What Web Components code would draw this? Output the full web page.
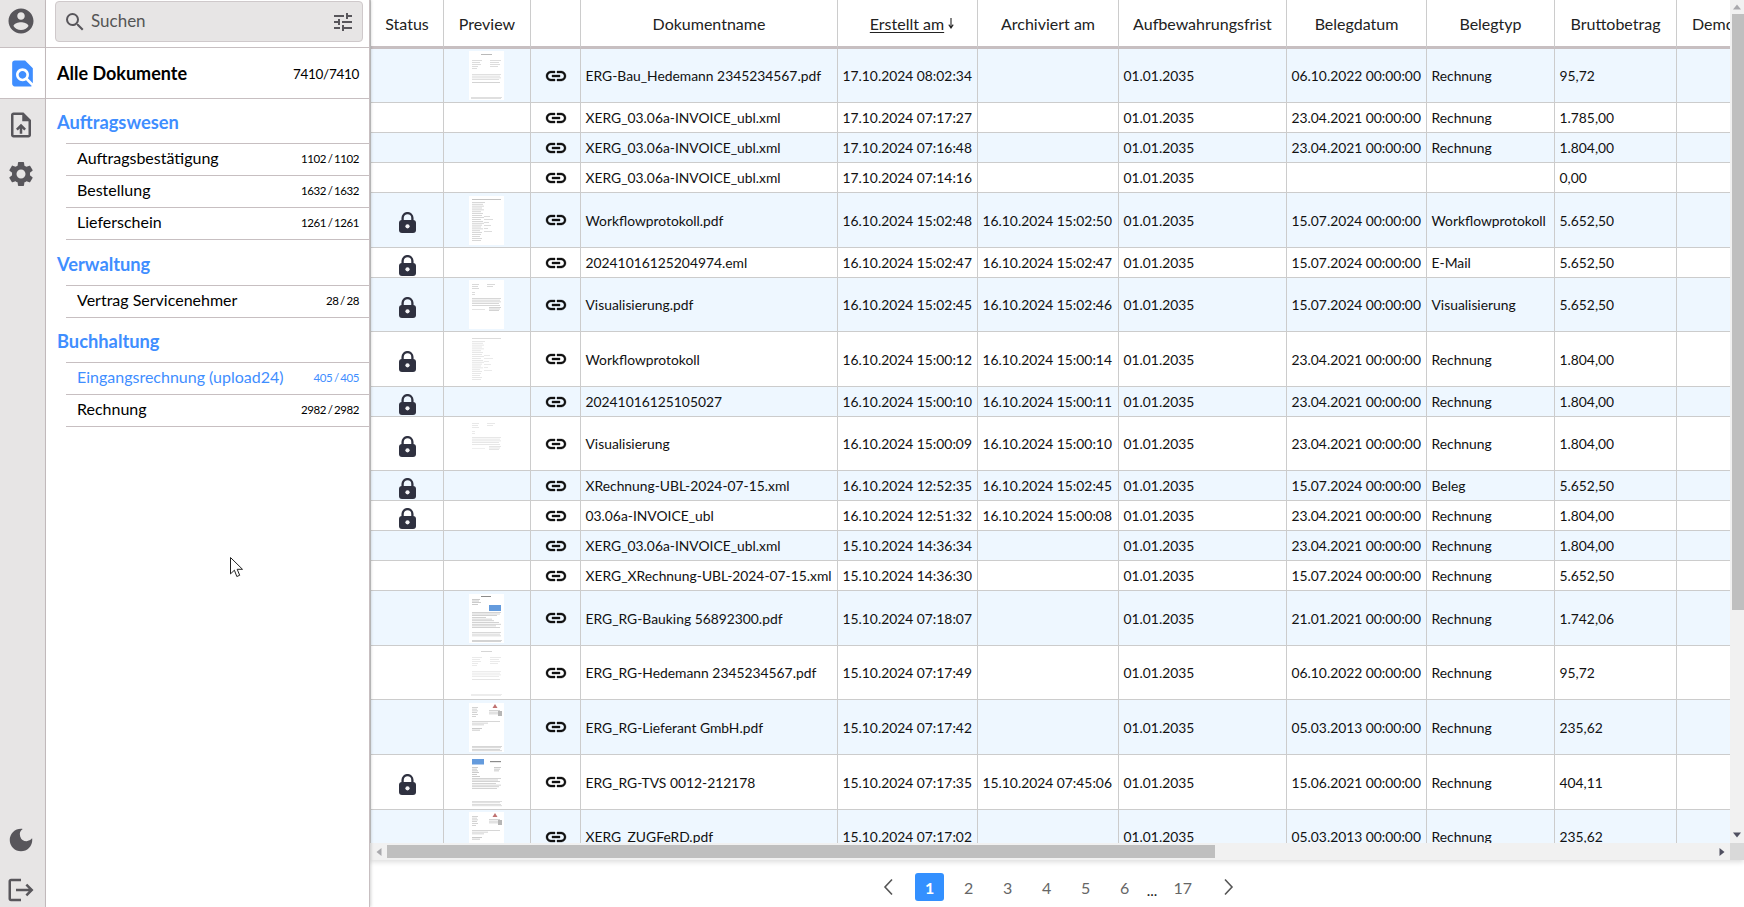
<!DOCTYPE html>
<html lang="de">
<head>
<meta charset="utf-8">
<title>Dokumente</title>
<style>
html,body{margin:0;height:100%;overflow:hidden;background:#fff;font-family:Lato,"Liberation Sans",sans-serif;color:#111}
</style>
</head>
<body>
<template id="t-shell"><style>
:host{display:flex;width:1744px;height:907px;position:relative;overflow:hidden}
main{flex:1;min-width:0;display:flex;flex-direction:column}
.cursor{position:absolute;left:230px;top:557px;width:13px;height:21px;z-index:5}
</style>
<slot name="rail"></slot><slot name="side"></slot>
<main><slot></slot></main>
<svg class="cursor" viewBox="0 0 13 21"><path d="M.5.5v16.4l3.9-3.7 2.4 6.3 2.9-1.2-2.5-6h5.3z" fill="#fff" stroke="#222" stroke-width="1"/></svg>
</template>

<template id="t-rail"><style>
:host{display:flex;flex-direction:column;flex:none;width:46px;box-sizing:border-box;height:907px;background:#e7e5e5;border-right:1px solid #c7bfc1}
.top{height:48px;box-sizing:border-box;border-bottom:1px solid #c7bfc1;display:flex;align-items:center;justify-content:center;padding-right:3px}
.active{height:51px;box-sizing:border-box;background:#fff;border-bottom:1px solid #c7bfc1;display:flex;align-items:center;justify-content:center;padding-right:1px}
.it{display:flex;justify-content:center;padding-right:3px}
.sp{flex:1}
svg{display:block;fill:#58565b}
.active svg{fill:#3f8eff}
</style>
<div class="top"><svg width="30" height="30" viewBox="0 0 24 24" style="margin-top:-5px"><path d="M12 2C6.48 2 2 6.48 2 12s4.48 10 10 10 10-4.48 10-10S17.52 2 12 2zm0 3c1.66 0 3 1.34 3 3s-1.34 3-3 3-3-1.34-3-3 1.34-3 3-3zm0 14.2c-2.5 0-4.71-1.28-6-3.22.03-1.99 4-3.08 6-3.08 1.99 0 5.97 1.09 6 3.08-1.29 1.94-3.5 3.22-6 3.22z"/></svg></div>
<div class="active"><svg width="31" height="31" viewBox="0 0 24 24"><path d="M20 19.59V8l-6-6H6c-1.1 0-1.99.9-1.99 2L4 20c0 1.1.89 2 1.99 2H18c.45 0 .85-.15 1.19-.4l-4.43-4.43c-.8.52-1.74.83-2.76.83-2.76 0-5-2.24-5-5s2.24-5 5-5 5 2.24 5 5c0 1.02-.31 1.96-.83 2.75L20 19.59zM9 13c0 1.66 1.34 3 3 3s3-1.34 3-3-1.34-3-3-3-3 1.34-3 3z"/></svg></div>
<div class="it" style="margin-top:11px"><svg width="30" height="30" viewBox="0 0 24 24"><path d="M14 2H6c-1.1 0-1.99.9-1.99 2L4 20c0 1.1.89 2 1.99 2H18c1.1 0 2-.9 2-2V8l-6-6zm4 18H6V4h7v5h5v11zM8 15.01l1.41 1.41L11 14.84V19h2v-4.16l1.59 1.59L16 15.01 12.01 11 8 15.01z"/></svg></div>
<div class="it" style="margin-top:19px"><svg width="30" height="30" viewBox="0 0 24 24"><path d="M19.14 12.94c.04-.3.06-.61.06-.94 0-.32-.02-.64-.07-.94l2.03-1.58c.18-.14.23-.41.12-.61l-1.92-3.32c-.12-.22-.37-.29-.59-.22l-2.39.96c-.5-.38-1.03-.7-1.62-.94l-.36-2.54c-.04-.24-.24-.41-.48-.41h-3.84c-.24 0-.43.17-.47.41l-.36 2.54c-.59.24-1.13.57-1.62.94l-2.39-.96c-.22-.08-.47 0-.59.22L2.74 8.87c-.12.21-.08.47.12.61l2.03 1.58c-.05.3-.09.63-.09.94s.02.64.07.94l-2.03 1.58c-.18.14-.23.41-.12.61l1.92 3.32c.12.22.37.29.59.22l2.39-.96c.5.38 1.03.7 1.62.94l.36 2.54c.05.24.24.41.48.41h3.84c.24 0 .44-.17.47-.41l.36-2.54c.59-.24 1.13-.56 1.62-.94l2.39.96c.22.08.47 0 .59-.22l1.92-3.32c.12-.22.07-.47-.12-.61l-2.01-1.58zM12 15.6c-1.98 0-3.6-1.62-3.6-3.6s1.62-3.6 3.6-3.6 3.6 1.62 3.6 3.6-1.62 3.6-3.6 3.6z"/></svg></div>
<div class="sp"></div>
<div class="it"><svg width="30" height="30" viewBox="0 0 24 24"><path d="M12 3a9 9 0 1 0 9 9c0-.46-.04-.92-.1-1.36a5.39 5.39 0 0 1-4.4 2.26 5.4 5.4 0 0 1-3.14-9.8c-.44-.06-.9-.1-1.36-.1z"/></svg></div>
<div class="it" style="margin-top:20px;margin-bottom:2px"><svg width="30" height="30" viewBox="0 0 24 24"><path d="M17 7l-1.41 1.41L18.17 11H8v2h10.17l-2.58 2.58L17 17l5-5zM4 5h8V3H4c-1.1 0-2 .9-2 2v14c0 1.1.9 2 2 2h8v-2H4V5z"/></svg></div>
</template>

<template id="t-side"><style>
:host{display:block;flex:none;width:324px;height:907px;box-sizing:border-box;background:#fff;border-right:1px solid #c7bfc1;box-shadow:1px 0 3px rgba(0,0,0,.18);position:relative;z-index:2}
</style><slot></slot></template>

<template id="t-search"><style>
:host{display:block;height:48px;box-sizing:border-box;padding:1px 6px 0 9px;border-bottom:1px solid #c7bfc1}
.box{height:41px;box-sizing:border-box;background:#e7e5e5;border:1px solid #cfc9cb;border-radius:4px;display:flex;align-items:center;padding:0 7px 0 7px;color:#555;font-size:17px}
.txt{flex:1;margin-left:4px;padding-bottom:2px}
svg{display:block;fill:#58565b}
</style><div class="box">
<svg width="24" height="24" viewBox="0 0 24 24"><path d="M15.5 14h-.79l-.28-.27A6.47 6.47 0 0 0 16 9.5 6.5 6.5 0 1 0 9.5 16c1.61 0 3.09-.59 4.23-1.57l.27.28v.79l5 4.99L20.49 19l-4.99-5zm-6 0C7.01 14 5 11.99 5 9.5S7.01 5 9.5 5 14 7.01 14 9.5 11.99 14 9.5 14z"/></svg>
<span class="txt"><slot></slot></span>
<svg width="24" height="24" viewBox="0 0 24 24"><path d="M3 17v2h6v-2H3zM3 5v2h10V5H3zm10 16v-2h8v-2h-8v-2h-2v6h2zM7 9v2H3v2h4v2h2V9H7zm14 4v-2H11v2h10zm-6-4h2V7h4V5h-4V3h-2v6z"/></svg>
</div></template>

<template id="t-all"><style>
:host{display:flex;align-items:center;height:51px;box-sizing:border-box;padding:0 10px 0 11px;border-bottom:1px solid #c7bfc1;color:#000}
.l{flex:1;font-size:18px;font-weight:700}
.c{font-size:13.5px;letter-spacing:-.3px;margin-top:2px}
</style><span class="l"><slot></slot></span><span class="c"><slot name="count"></slot></span></template>

<template id="t-group"><style>
:host{display:block}
h2{margin:0;height:44px;box-sizing:border-box;padding:1px 0 0 11px;display:flex;align-items:center;font-size:18.3px;font-weight:700;color:#3f8eff}
.list{margin-left:20px;border-top:1px solid #c7bfc1}
</style><h2><slot name="title"></slot></h2><div class="list"><slot></slot></div></template>

<template id="t-item"><style>
:host{display:flex;align-items:center;height:32px;box-sizing:border-box;border-bottom:1px solid #c7bfc1;padding:0 10px 4px 11px;color:#000}
:host([selected]){color:#3f8eff}
.l{flex:1;font-size:16px}
.c{font-size:11.5px;letter-spacing:-.45px;word-spacing:-.8px;margin-top:2px}
</style><span class="l"><slot></slot></span><span class="c"><slot name="count"></slot></span></template>

<template id="t-bar"><style>
:host{display:flex;background:#f1f1f1;flex:none}
:host([orient=v]){flex-direction:column;width:14px;height:843px}
:host([orient=h]){flex-direction:row;height:17px;flex:1}
.a{flex:none;display:flex;align-items:center;justify-content:center}
:host([orient=v]) .a{height:14px}
:host([orient=v]) .a.end{height:17px;margin-top:auto}
:host([orient=h]) .a{width:17px}
.t{background:#bfbfbf;flex:none}
:host([orient=v]) .t{margin-left:2px;width:12px;height:596px}
:host([orient=h]) .t{margin:2px 0;height:13px;width:828px}
.sp{flex:1}
svg{display:block}
</style>
<span class="a"><svg id="s" width="8" height="8" viewBox="0 0 8 8"><path id="p" fill="#a9a9ad"/></svg></span>
<span class="t"></span><span class="sp"></span>
<span class="a end"><svg width="8" height="8" viewBox="0 0 8 8"><path id="q" fill="#505060"/></svg></span>
</template>

<template id="t-pager"><style>
:host{flex:1;display:flex;align-items:center;justify-content:center;gap:10px;font-size:16px;color:#666;padding:7px 0 0 3px}
button{all:unset;width:29px;height:28px;display:flex;align-items:center;justify-content:center;border-radius:3px}
button.on{background:#3390ff;color:#fff;font-weight:700}
.ch{width:17px;height:28px;display:flex;align-items:center;justify-content:center}
.ch.prev{margin-right:8.5px}
.ch.next{margin-left:13px}
.ell{color:#222;width:10px;margin:0 1.5px 0 -2.5px;align-self:center;padding-top:5px;font-size:15px}
svg{display:block;fill:none;stroke:#555;stroke-width:1.6}
</style><span class="ch prev"><svg width="12" height="18" viewBox="0 0 12 18"><path d="M10 1.5 3 9l7 7.5"/></svg></span>
<button class="on">1</button><button>2</button><button>3</button><button>4</button><button>5</button><button>6</button>
<span class="ell">...</span><button>17</button>
<span class="ch next"><svg width="12" height="18" viewBox="0 0 12 18"><path d="M2 1.5 9 9l-7 7.5"/></svg></span></template>

<template id="t-table"><style>
:host{display:grid;grid-template-columns:1360px 14px;grid-template-rows:843px 17px;flex:none;height:860px;box-shadow:0 2px 5px rgba(0,0,0,.14);position:relative;z-index:1}
.vp{overflow:hidden;border-left:1px solid #ccc;box-sizing:border-box;background:#fff}
table{border-collapse:separate;border-spacing:0;table-layout:fixed;width:1459px;font-size:13.85px;color:#111}
th,td{box-sizing:border-box;border-right:1px solid #ccc;border-bottom:1px solid #ccc;padding:0 0 0 4.5px;white-space:nowrap;overflow:hidden;vertical-align:middle}
th{height:49px;border-bottom:3px solid #c7bfc1;font-size:16px;font-weight:400;text-align:center;padding:0;color:#222}
tr.alt td{background:#eef7ff}
td.ic{padding:0;text-align:center}
td.ic svg{display:block;margin:auto}
td.p svg{display:block;margin:0 0 0 25px}
.link{fill:#111;stroke:#111;stroke-width:.35}
.lock{margin-top:5px !important}
th u{text-underline-offset:2px}
th .s{margin-left:4px;vertical-align:1px}
th.sorted{padding-left:9px}
th.left{text-align:left;padding-left:15px}
.corner{background:#d9d9d9}
</style><div class="vp"><table id="tb"><colgroup><col style="width:73px"><col style="width:87px"><col style="width:50px"><col style="width:257px"><col style="width:140px"><col style="width:141px"><col style="width:168px"><col style="width:140px"><col style="width:128px"><col style="width:122px"><col style="width:153px"></colgroup>
<thead><tr><th>Status</th><th>Preview</th><th></th><th>Dokumentname</th><th class="sorted"><u>Erstellt am</u><svg class="s" width="6" height="11" viewBox="0 0 6 11"><path d="M3 0v9M.8 6.6 3 10l2.2-3.4" fill="none" stroke="#222" stroke-width="1.1"/></svg></th><th>Archiviert am</th><th>Aufbewahrungsfrist</th><th>Belegdatum</th><th>Belegtyp</th><th>Bruttobetrag</th><th class="left">Demo</th></tr></thead>
<tbody></tbody></table></div>
<doc-scrollbar orient="v"></doc-scrollbar>
<doc-scrollbar orient="h"></doc-scrollbar>
<div class="corner"></div></template>

<script>
const reg=(name,tpl,extra)=>customElements.define(name,class extends HTMLElement{
  constructor(){super();this.attachShadow({mode:'open'}).appendChild(document.getElementById(tpl).content.cloneNode(true));}
  connectedCallback(){extra&&extra.call(this);}
});
reg('app-shell','t-shell');
reg('nav-rail','t-rail');
reg('side-panel','t-side');
reg('search-box','t-search');
reg('all-docs','t-all');
reg('nav-group','t-group');
reg('nav-item','t-item');
reg('doc-pager','t-pager');
reg('doc-scrollbar','t-bar',function(){
  const v=this.getAttribute('orient')==='v',r=this.shadowRoot;
  r.getElementById('p').setAttribute('d',v?'M4 1.5 8 6.5H0z':'M6.5 0v8L1.5 4z');
  r.getElementById('q').setAttribute('d',v?'M0 1.5h8L4 6.5z':'M1.5 0v8l5-4z');
});

const L=(x,y,w,c='#a9a9a9',h=.6)=>`<rect x="${x}" y="${y}" width="${w}" height="${h}" fill="${c}"/>`;
const many=(x,y,step,ws,c,h)=>ws.map((w,i)=>L(x,y+i*step,w,c,h)).join('');
const T={
 invoice:()=>L(12,3,11,'#999',.8)+many(3,9,2,[10,8,9,6,5],'#bbb')+many(21,9,2,[11,9,10,8],'#bbb')+many(3,23,1.8,[29,28,29,27],'#c4c4c4')+L(3,31,28,'#aaa')+many(2,46,1.3,[31,30],'#c2c2c2'),
 flow:()=>L(3,3,29,'#aaa',.8)+many(3,6,1.9,[13,11,12,10,12,9,11,10,12,9,11,12,10,9,11,8,10,9,8,10,9],'#b2b2b2')+many(15,20,3,[6,9,5,7,4,8],'#bbb'),
 visual:()=>many(3,4,2,[7,6,7],'#b6b6b6')+many(18,4,2,[8,6],'#b6b6b6')+many(3,12,2,[3,3],'#bbb')+many(3,18,1.8,[29,28,29,27,28],'#b2b2b2')+many(20,27,1.7,[12,11,10],'#aaa')+L(3,29,13,'#ccc'),
 bauking:()=>L(12,2,10,'#777',1)+'<rect x="20" y="11" width="12" height="6" fill="#4a8ad8"/>'+many(3,5,1.7,[8,7,9,6],'#999')+many(3,18,1.7,[29,28,25,14,20,22,27,29,24,28],'#a8a8a8')+many(3,38,1.8,[29,28,29],'#b5b5b5')+many(3,46,1.4,[30,29],'#aaa'),
 lieferant:()=>'<path d="M26 1l2.5 4h-5z" fill="#b45a5a"/>'+many(3,4,1.8,[6,5,6,5,6,4],'#aaa')+many(20,7,1.8,[11,10,12],'#aaa')+'<rect x="29" y="8" width="4" height="5" fill="#aaa"/>'+many(3,18,1.8,[28,16,12],'#b0b0b0')+many(3,25,1.8,[10,8],'#999')+many(3,43,1.5,[30,29,28,30],'#b0b0b0'),
 tvs:()=>'<rect x="3" y="1" width="12" height="5.5" fill="#4a8ad8"/>'+L(21,3,11,'#777',1.2)+many(3,9,1.8,[6,5,6,7,5,8],'#999')+many(25,9,1.8,[7,6,5],'#999')+many(3,20,1.7,[29,26,28,24,29,27,25],'#aaa')+many(3,43,1.5,[30,28,29,30],'#bbb'),
 zugferd:()=>T.lieferant()
};
const thumb=(k,o=1)=>`<svg width="35" height="49" viewBox="0 0 35 49"><rect width="35" height="49" fill="#fff"/><g opacity="${o}">${T[k]()}</g></svg>`;
const LINK=`<svg class="link" width="24" height="24" viewBox="0 0 24 24"><path d="M3.9 12c0-1.71 1.39-3.1 3.1-3.1h4V7H7c-2.76 0-5 2.24-5 5s2.24 5 5 5h4v-1.9H7c-1.71 0-3.1-1.39-3.1-3.1zM8 13h8v-2H8v2zm9-6h-4v1.9h4c1.71 0 3.1 1.39 3.1 3.1s-1.39 3.1-3.1 3.1h-4V17h4c2.76 0 5-2.24 5-5s-2.24-5-5-5z"/></svg>`;
const LOCK=`<svg class="lock" width="17" height="21" viewBox="0 0 17 21"><path d="M3.6 9.5V6a4.9 4.9 0 0 1 9.8 0v3.5" fill="none" stroke="#2f3140" stroke-width="2.3"/><rect y="8" width="17" height="13" rx="3" fill="#2f3140"/><circle cx="8.5" cy="14.3" r="2.1" fill="#f4f4f6"/></svg>`;
const X='XERG_03.06a-INVOICE_ubl.xml',R='Rechnung',D='01.01.2035',z=' 00:00:00';
const rows=[
[54,0,'invoice','ERG-Bau_Hedemann 2345234567.pdf','17.10.2024 08:02:34','','06.10.2022',R,'95,72'],
[30,0,0,X,'17.10.2024 07:17:27','','23.04.2021',R,'1.785,00'],
[30,0,0,X,'17.10.2024 07:16:48','','23.04.2021',R,'1.804,00'],
[30,0,0,X,'17.10.2024 07:14:16','','','','0,00'],
[55,1,'flow','Workflowprotokoll.pdf','16.10.2024 15:02:48','16.10.2024 15:02:50','15.07.2024','Workflowprotokoll','5.652,50'],
[30,1,0,'20241016125204974.eml','16.10.2024 15:02:47','16.10.2024 15:02:47','15.07.2024','E-Mail','5.652,50'],
[54,1,'visual','Visualisierung.pdf','16.10.2024 15:02:45','16.10.2024 15:02:46','15.07.2024','Visualisierung','5.652,50'],
[55,1,'flow','Workflowprotokoll','16.10.2024 15:00:12','16.10.2024 15:00:14','23.04.2021',R,'1.804,00'],
[30,1,0,'20241016125105027','16.10.2024 15:00:10','16.10.2024 15:00:11','23.04.2021',R,'1.804,00'],
[54,1,'visual','Visualisierung','16.10.2024 15:00:09','16.10.2024 15:00:10','23.04.2021',R,'1.804,00'],
[30,1,0,'XRechnung-UBL-2024-07-15.xml','16.10.2024 12:52:35','16.10.2024 15:02:45','15.07.2024','Beleg','5.652,50'],
[30,1,0,'03.06a-INVOICE_ubl','16.10.2024 12:51:32','16.10.2024 15:00:08','23.04.2021',R,'1.804,00'],
[30,0,0,X,'15.10.2024 14:36:34','','23.04.2021',R,'1.804,00'],
[30,0,0,'XERG_XRechnung-UBL-2024-07-15.xml','15.10.2024 14:36:30','','15.07.2024',R,'5.652,50'],
[55,0,'bauking','ERG_RG-Bauking 56892300.pdf','15.10.2024 07:18:07','','21.01.2021',R,'1.742,06'],
[54,0,'invoice','ERG_RG-Hedemann 2345234567.pdf','15.10.2024 07:17:49','','06.10.2022',R,'95,72'],
[55,0,'lieferant','ERG_RG-Lieferant GmbH.pdf','15.10.2024 07:17:42','','05.03.2013',R,'235,62'],
[55,1,'tvs','ERG_RG-TVS 0012-212178','15.10.2024 07:17:35','15.10.2024 07:45:06','15.06.2021',R,'404,11'],
[54,0,'zugferd','XERG_ZUGFeRD.pdf','15.10.2024 07:17:02','','05.03.2013',R,'235,62']
];
const PALE=new Set([7,9,15]);
reg('doc-table','t-table',function(){
  const b=this.shadowRoot.querySelector('tbody');
  b.innerHTML=rows.map((r,i)=>{
    const [h,lock,th,name,cr,ar,bd,ty,am]=r;
    return `<tr class="${i%2?'':'alt'}" style="height:${h}px"><td class="ic">${lock?LOCK:''}</td><td class="ic p">${th?thumb(th,PALE.has(i)?.5:.85):''}</td><td class="ic">${LINK}</td><td>${name}</td><td>${cr}</td><td>${ar}</td><td>${D}</td><td>${bd?bd+z:''}</td><td>${ty}</td><td>${am}</td><td></td></tr>`;
  }).join('');
});
</script>

<app-shell>
  <nav-rail slot="rail"></nav-rail>
  <side-panel slot="side">
    <search-box>Suchen</search-box>
    <all-docs>Alle Dokumente<span slot="count">7410/7410</span></all-docs>
    <nav-group><span slot="title">Auftragswesen</span>
      <nav-item>Auftragsbestätigung<span slot="count">1102 / 1102</span></nav-item>
      <nav-item>Bestellung<span slot="count">1632 / 1632</span></nav-item>
      <nav-item>Lieferschein<span slot="count">1261 / 1261</span></nav-item>
    </nav-group>
    <nav-group style="margin-top:1px"><span slot="title">Verwaltung</span>
      <nav-item>Vertrag Servicenehmer<span slot="count">28 / 28</span></nav-item>
    </nav-group>
    <nav-group><span slot="title">Buchhaltung</span>
      <nav-item selected>Eingangsrechnung (upload24)<span slot="count">405 / 405</span></nav-item>
      <nav-item>Rechnung<span slot="count">2982 / 2982</span></nav-item>
    </nav-group>
  </side-panel>
  <doc-table></doc-table>
  <doc-pager></doc-pager>
</app-shell>
</body>
</html>
